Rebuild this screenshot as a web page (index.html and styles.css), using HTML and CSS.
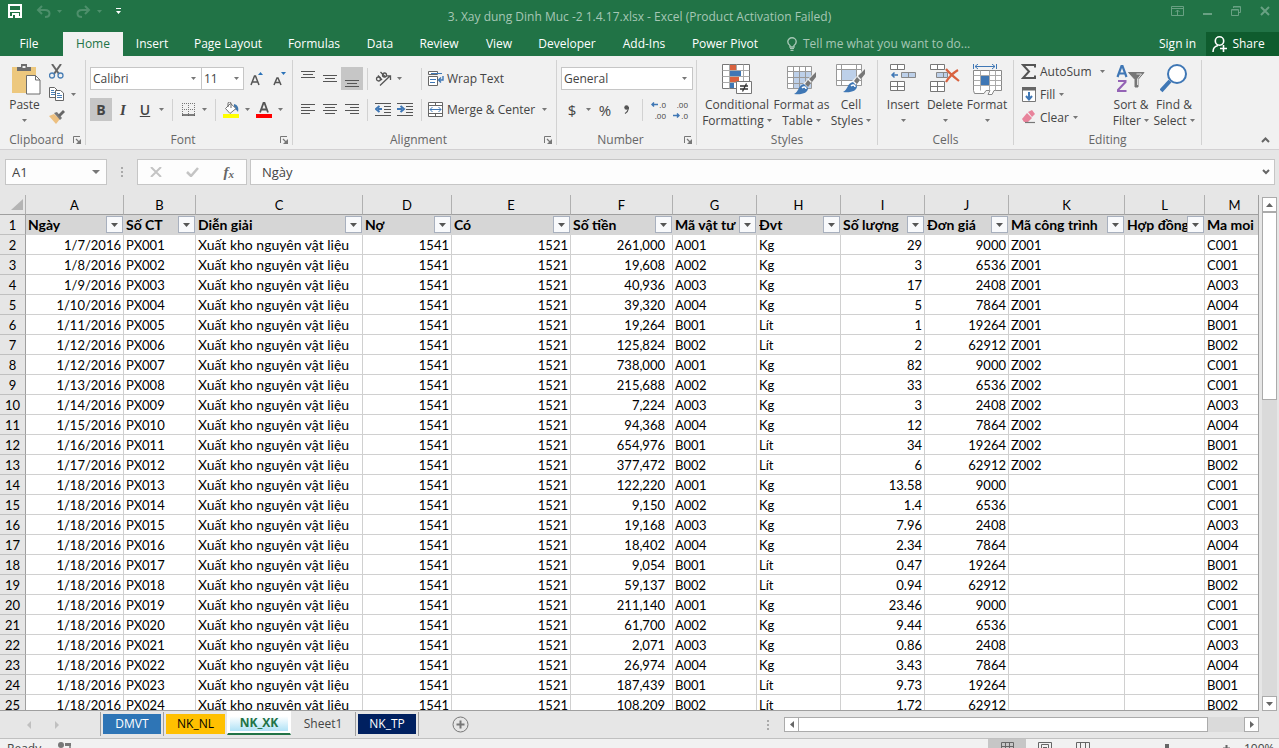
FILE: index.html
```html
<!DOCTYPE html>
<html lang="vi">
<head>
<meta charset="utf-8">
<title>3. Xay dung Dinh Muc -2 1.4.17.xlsx - Excel</title>
<link rel="stylesheet" href="styles.css">
</head>
<body>
<svg class="defs" width="0" height="0" aria-hidden="true">
  <symbol id="caret" viewBox="0 0 5 3"><path d="M0 0h5L2.5 3z" fill="currentColor"/></symbol>
  <symbol id="launcher" viewBox="0 0 8 8"><path d="M.5 7V.5H7" fill="none" stroke="#777"/><path d="M3 3l3 3M7.5 3.500v4h-4" fill="none" stroke="#777" stroke-width="1.200"/><path d="M7 4v3H4z" fill="#777"/></symbol>
</svg>
<div class="app">
  <header class="titlebar">
    <div class="quick">
      <button class="qbtn" aria-label="Save"><svg width="14" height="14" viewBox="0 0 14 14"><path d="M1 1h12v12H1z" fill="none" stroke="#fff" stroke-width="2"/><path d="M1 7h12" stroke="#fff" stroke-width="2"/><path d="M4 9h7v5H4z" fill="#fff"/><path d="M5 11h2v3H5z" fill="#217346"/></svg></button>
      <button class="qbtn dim" aria-label="Undo"><svg width="15" height="13" viewBox="0 0 15 13"><path d="M6 1L2 5l4 4M2 5h7c6 0 6 7 0 7" fill="none" stroke="currentColor" stroke-width="2"/></svg><svg class="caret" width="5" height="3"><use href="#caret"/></svg></button>
      <button class="qbtn dim" aria-label="Redo"><svg width="15" height="13" viewBox="0 0 15 13"><path d="M9 1l4 4-4 4M13 5H6c-6 0-6 7 0 7" fill="none" stroke="currentColor" stroke-width="2"/></svg><svg class="caret" width="5" height="3"><use href="#caret"/></svg></button>
      <button class="qbtn" aria-label="Customize"><svg width="5" height="6" viewBox="0 0 5 6"><path d="M0 0h5v1H0zM0 3h5L2.500 6z" fill="#fff"/></svg></button>
    </div>
    <h1 class="title">3. Xay dung Dinh Muc -2 1.4.17.xlsx - Excel (Product Activation Failed)</h1>
    <div class="winbtns">
      <button aria-label="Ribbon display"><svg width="13" height="10" viewBox="0 0 13 10"><path d="M.5.500h12v9H.500zM1 2.500h11M6.500 9V4M4.500 6l2-2 2 2" fill="none" stroke="currentColor"/></svg></button>
      <button aria-label="Minimize"><svg width="9" height="10" viewBox="0 0 9 10"><path d="M0 7h9v2H0z" fill="currentColor"/></svg></button>
      <button aria-label="Restore"><svg width="10" height="10" viewBox="0 0 10 10"><path d="M2.500 2V.500h7v6H8M.500 3.500h7v6h-7zM2 1h7M1 4h6" fill="none" stroke="currentColor"/></svg></button>
      <button aria-label="Close"><svg width="10" height="10" viewBox="0 0 10 10"><path d="M1 1l8 8M9 1L1 9" stroke="currentColor" stroke-width="2"/></svg></button>
    </div>
  </header>
  <nav class="tabs">
    <button class="file">File</button>
    <button class="active">Home</button><button>Insert</button><button>Page Layout</button><button>Formulas</button><button>Data</button><button>Review</button><button>View</button><button>Developer</button><button>Add-Ins</button><button>Power Pivot</button>
    <button class="tell"><svg width="10" height="14" viewBox="0 0 10 14"><path d="M3 10V8.500C1.500 7.500.800 6.500.800 4.800.800 2.500 2.700.800 5 .800s4.200 1.700 4.200 4c0 1.700-.700 2.700-2.200 3.700V10z" fill="none" stroke="currentColor" stroke-width="1.400"/><path d="M3 11.500h4M3.500 13.300h3" stroke="currentColor" stroke-width="1.200"/></svg>Tell me what you want to do...</button>
    <span class="grow"></span>
    <button class="signin">Sign in</button>
    <button class="share"><svg width="16" height="16" viewBox="0 0 16 16"><circle cx="7.500" cy="5" r="4.200" fill="none" stroke="#fff" stroke-width="1.600"/><path d="M1 16c0-4 2.500-6 5-6.500M11.500 9v7M8 12.500h7" fill="none" stroke="#fff" stroke-width="1.600"/></svg>Share</button>
  </nav>

  <section class="ribbon">
    <div class="group clipboard">
      <div class="body">
        <button class="big paste"><svg width="29" height="31" viewBox="0 0 29 31"><path d="M0 3h24v26H0z" fill="#edc87e"/><path d="M5 7V3h4V0h6v3h4v4z" fill="#6d6d6d"/><path d="M10.500 2h3v2h-3z" fill="#f1f1f1"/><path d="M14.500 11.500h9l4.500 4.500v14H14.500z" fill="#fff" stroke="#6d6d6d"/><path d="M23.500 11.500V16H28" fill="none" stroke="#6d6d6d"/></svg><span>Paste</span><svg class="caret" width="5" height="3"><use href="#caret"/></svg></button>
        <div class="stack">
          <button aria-label="Cut"><svg width="15" height="15" viewBox="0 0 15 15"><path d="M3 0l7 10M12 0L5 10" stroke="#666" stroke-width="2"/><circle cx="3" cy="11.500" r="2.500" fill="none" stroke="#4a7fb5" stroke-width="1.300"/><circle cx="11.500" cy="11.500" r="2.500" fill="none" stroke="#4a7fb5" stroke-width="1.300"/></svg></button>
          <button aria-label="Copy"><svg width="15" height="14" viewBox="0 0 15 14"><path d="M.500.500h5L8 3v7.500H.500z" fill="#fff" stroke="#666"/><path d="M2 3.500h3M2 5.500h4M2 7.500h4" stroke="#4a7fb5"/><path d="M6.500 3.500h5L14.500 6v7.500h-8z" fill="#fff" stroke="#666"/><path d="M8 6.500h3M8 8.500h5M8 10.500h5" stroke="#4a7fb5"/></svg><svg class="caret" width="5" height="3"><use href="#caret"/></svg></button>
          <button aria-label="Format Painter"><svg width="16" height="14" viewBox="0 0 16 14"><path d="M0 6l5-2 6 5-4 5z" fill="#edc080"/><path d="M5 3l3-1 5 6-2 2z" fill="#777"/><path d="M9 5l5-5 2 2-5 5z" fill="#666"/></svg></button>
        </div>
      </div>
      <div class="label">Clipboard<button class="launch" aria-label="Clipboard options"><svg width="8" height="8"><use href="#launcher"/></svg></button></div>
    </div>

    <div class="group font">
      <div class="rows">
        <div class="row">
          <div class="combo family"><select aria-label="Font"><option>Calibri</option></select><svg class="caret" width="5" height="3"><use href="#caret"/></svg></div>
          <div class="combo size"><select aria-label="Font size"><option>11</option></select><svg class="caret" width="5" height="3"><use href="#caret"/></svg></div>
          <button class="tool grow-font" aria-label="Increase font size"><svg width="14" height="14" viewBox="0 0 14 14"><path d="M1 13L4.500 4h1L9 13M2.500 10h5" fill="none" stroke="#555" stroke-width="1.500"/><path d="M8 3h5l-2.500-3z" fill="#2b72b8"/></svg></button>
          <button class="tool" aria-label="Decrease font size"><svg width="14" height="14" viewBox="0 0 14 14"><path d="M1 13l3-7h1l3 7M2 10.500h5" fill="none" stroke="#555" stroke-width="1.500"/><path d="M8 0h5l-2.500 3z" fill="#2b72b8"/></svg></button>
        </div>
        <div class="row">
          <button class="tool on"><b>B</b></button>
          <button class="tool"><i class="serif">I</i></button>
          <button class="tool"><u>U</u></button>
          <button class="drop" aria-label="Underline options"><svg class="caret" width="5" height="3"><use href="#caret"/></svg></button>
          <span class="vsep"></span>
          <button class="tool" aria-label="Borders"><svg width="13" height="13" viewBox="0 0 13 13"><path d="M0 .500h13M0 6.500h13M.500 0v13M6.500 0v13M12.500 0v13" stroke="#777" stroke-dasharray="1 1"/><path d="M0 12h13" stroke="#555" stroke-width="1.500"/></svg></button>
          <button class="drop" aria-label="Border options"><svg class="caret" width="5" height="3"><use href="#caret"/></svg></button>
          <span class="vsep"></span>
          <button class="tool" aria-label="Fill color"><svg width="16" height="16" viewBox="0 0 16 16"><path d="M11 2c4 1 5 4 4 8-1-2-3-3-4-3z" fill="#3f77ae"/><path d="M2.500 6.500l5-5 5.500 5-6 5z" fill="#fff" stroke="#777"/><path d="M5 5V1.500a1 1 0 0 1 3 0V6" fill="none" stroke="#666"/><path d="M0 12h16v4H0z" fill="#ff0"/></svg></button>
          <button class="drop" aria-label="Fill options"><svg class="caret" width="5" height="3"><use href="#caret"/></svg></button>
          <button class="tool" aria-label="Font color"><svg width="16" height="16" viewBox="0 0 16 16"><path d="M4 10.500L7.500 1h1L12 10.500M5.500 7.500h5" fill="none" stroke="#555" stroke-width="1.800"/><path d="M0 12h16v4H0z" fill="#f00"/></svg></button>
          <button class="drop" aria-label="Font color options"><svg class="caret" width="5" height="3"><use href="#caret"/></svg></button>
        </div>
      </div>
      <div class="label">Font<button class="launch" aria-label="Font options"><svg width="8" height="8"><use href="#launcher"/></svg></button></div>
    </div>

    <div class="group align">
      <div class="rows">
        <div class="row">
          <button class="tool" aria-label="Top align"><svg width="14" height="16" viewBox="0 0 14 16"><path d="M0 .500h14M2 3.500h10M0 6.500h14" stroke="#555"/></svg></button>
          <button class="tool" aria-label="Middle align"><svg width="14" height="16" viewBox="0 0 14 16"><path d="M0 4.500h14M2 7.500h10M0 10.500h14" stroke="#555"/></svg></button>
          <button class="tool on" aria-label="Bottom align"><svg width="14" height="16" viewBox="0 0 14 16"><path d="M0 9.500h14M2 12.500h10M0 15.500h14" stroke="#555"/></svg></button>
          <span class="vsep"></span>
          <button class="tool" aria-label="Orientation"><svg width="17" height="15" viewBox="0 0 17 15"><g fill="none" stroke="#555" stroke-width="1.300"><circle cx="3.500" cy="8" r="2"/><path d="M3 4.500l4 4.500M5.500 1l5 5"/><circle cx="9.500" cy="4" r="2"/><path d="M5 14.500L15 5M11.500 4.800H15.500V9"/></g></svg></button>
          <button class="drop" aria-label="Orientation options"><svg class="caret" width="5" height="3"><use href="#caret"/></svg></button>
          <span class="vsep wide"></span>
          <button class="wide-btn"><svg width="16" height="15" viewBox="0 0 16 15"><path d="M.500.500h9v3h-9zM.500 7V5.500h9v9h-9z" fill="#fff" stroke="#666"/><path d="M3 2.500h11M2 8.500h6M2 11.500h5" stroke="#3f77b5"/><path d="M15 5v4h-4M13 6.500L10.500 9l2.500 2.500" fill="none" stroke="#3f77b5" stroke-width="1.400"/></svg>Wrap Text</button>
        </div>
        <div class="row">
          <button class="tool" aria-label="Align left"><svg width="14" height="11" viewBox="0 0 14 11"><path d="M0 .500h14M0 3.500h9M0 6.500h14M0 9.500h9" stroke="#555"/></svg></button>
          <button class="tool" aria-label="Center"><svg width="14" height="11" viewBox="0 0 14 11"><path d="M0 .500h14M2 3.500h10M0 6.500h14M2 9.500h10" stroke="#555"/></svg></button>
          <button class="tool" aria-label="Align right"><svg width="14" height="11" viewBox="0 0 14 11"><path d="M0 .500h14M5 3.500h9M0 6.500h14M5 9.500h9" stroke="#555"/></svg></button>
          <span class="vsep"></span>
          <button class="tool" aria-label="Decrease indent"><svg width="16" height="13" viewBox="0 0 16 13"><path d="M0 .500h16M9 3.500h7M9 6.500h7M9 9.500h7M0 12.500h16" stroke="#555"/><path d="M7 6H3M4.500 3L1 6l3.500 3" fill="none" stroke="#3f77b5" stroke-width="2"/></svg></button>
          <button class="tool" aria-label="Increase indent"><svg width="16" height="13" viewBox="0 0 16 13"><path d="M0 .500h16M9 3.500h7M9 6.500h7M9 9.500h7M0 12.500h16" stroke="#555"/><path d="M0 6h5M3.500 3L7 6 3.500 9" fill="none" stroke="#3f77b5" stroke-width="2"/></svg></button>
          <span class="vsep indent"></span>
          <button class="wide-btn"><svg width="16" height="15" viewBox="0 0 16 15"><path d="M.500.500h14v14H.500zM0 3.500h15M0 11.500h15M7.500 0v3.500M7.500 11.500V15" fill="#fff" stroke="#666"/><path d="M2 7.500h11M4.500 5L2 7.500 4.500 10M10.500 5L13 7.500 10.500 10" fill="none" stroke="#3f77b5"/></svg>Merge &amp; Center</button>
          <button class="drop end" aria-label="Merge options"><svg class="caret" width="5" height="3"><use href="#caret"/></svg></button>
        </div>
      </div>
      <div class="label">Alignment<button class="launch" aria-label="Alignment options"><svg width="8" height="8"><use href="#launcher"/></svg></button></div>
    </div>

    <div class="group number">
      <div class="rows">
        <div class="row"><div class="combo format"><select aria-label="Number format"><option>General</option></select><svg class="caret" width="5" height="3"><use href="#caret"/></svg></div></div>
        <div class="row">
          <button class="tool sym">$</button>
          <button class="drop" aria-label="Currency options"><svg class="caret" width="5" height="3"><use href="#caret"/></svg></button>
          <button class="tool sym">%</button>
          <button class="tool comma" aria-label="Comma style"><svg width="5" height="9" viewBox="0 0 5 9"><circle cx="2.500" cy="2.500" r="2.200" fill="#555"/><path d="M4.500 2c0 3-1 5-3.500 6.500" fill="none" stroke="#555" stroke-width="1.200"/></svg></button>
          <span class="vsep"></span>
          <button class="tool dec" aria-label="Increase decimal"><span><svg width="7" height="5" viewBox="0 0 7 5"><path d="M7 2.500H1M3 .500l-2 2 2 2" fill="none" stroke="#3f77b5" stroke-width="1.500"/></svg>.0</span><span>.00</span></button>
          <button class="tool dec" aria-label="Decrease decimal"><span>.00</span><span><svg width="7" height="5" viewBox="0 0 7 5"><path d="M0 2.500h6M4 .500l2 2-2 2" fill="none" stroke="#3f77b5" stroke-width="1.500"/></svg>.0</span></button>
        </div>
      </div>
      <div class="label">Number<button class="launch" aria-label="Number options"><svg width="8" height="8"><use href="#launcher"/></svg></button></div>
    </div>

    <div class="group styles">
      <div class="body">
        <button class="big"><svg width="30" height="31" viewBox="0 0 30 31"><path d="M.500.500h27v24H.500z" fill="#fff" stroke="#777"/><path d="M8 1h6v5H8zM8 13h9v5H8z" fill="#d9623f"/><path d="M8 7h11v5H8zM8 19h4v5H8z" fill="#3f77b5"/><path d="M.500 6.500h27M.500 12.500h27M.500 18.500h27M7.500.500v24M14.500.500v24M21.500.500v24" fill="none" stroke="#aaa"/><path d="M8 1h6v5H8zM8 13h9v5H8z" fill="#d9623f"/><path d="M8 7h11v5H8z" fill="#3f77b5"/><path d="M14.500 17.500h15v12h-15z" fill="#fff" stroke="#777"/><path d="M18 22h8M18 25h8M24.500 19.500l-4 8" stroke="#333" stroke-width="1.300"/></svg><span>Conditional<br>Formatting <svg class="caret" width="5" height="3"><use href="#caret"/></svg></span></button>
        <button class="big"><svg width="30" height="31" viewBox="0 0 30 31"><path d="M.500 2.500h24v22H.500z" fill="#fff"/><path d="M7 8h17v16H7z" fill="#bdd0e9"/><path d="M.500 2.500h24v22H.500zM.500 7.500h24M.500 13.500h24M.500 19.500h24M6.500 2.500v22M12.500 2.500v22M18.500 2.500v22" fill="none" stroke="#999"/><path d="M29 7v6l-9 10-4-3z" fill="#f1f1f1"/><path d="M29 8v5l-4 5-3-3zM21 16l3 3-3 4-3-3z" fill="#777"/><path d="M17 20l4 4c0 5-6 7-14 6 5-2 4-9 10-10z" fill="#3f77b5"/><path d="M15 24c2-2 4-1 4 1" fill="none" stroke="#fff" stroke-width="1.500"/></svg><span>Format as<br>Table <svg class="caret" width="5" height="3"><use href="#caret"/></svg></span></button>
        <button class="big"><svg width="30" height="31" viewBox="0 0 30 31"><path d="M.500.500h25v21H.500z" fill="#fff"/><path d="M6 6h14v10H6z" fill="#bdd0e9"/><path d="M.500.500h25v21H.500zM.500 5.500h25M.500 16.500h25M5.500.500v21M20.500.500v21" fill="none" stroke="#999"/><path d="M29 4v6l-8 10-5-3z" fill="#f1f1f1"/><path d="M29 5v5l-4 5-3-3zM21 13l3 3-3 4-3-3z" fill="#777"/><path d="M17 18l4 4c0 5-6 7-14 6 5-2 4-9 10-10z" fill="#3f77b5"/><path d="M15 22c2-2 4-1 4 1" fill="none" stroke="#fff" stroke-width="1.500"/></svg><span>Cell<br>Styles <svg class="caret" width="5" height="3"><use href="#caret"/></svg></span></button>
      </div>
      <div class="label">Styles</div>
    </div>

    <div class="group cells">
      <div class="body">
        <button class="big"><svg width="26" height="31" viewBox="0 0 26 31"><path d="M.500.500h14v5H.500zM7.500.500v5M.500 17.500h14v9H.500zM.500 22.500h14M7.500 17.500v9" fill="#fff" stroke="#777"/><path d="M11.500 8.500h14v5h-14zM18.500 8.500v5" fill="#bdd0e9" stroke="#888"/><path d="M8 11H2M4.500 8.500L2 11l2.500 2.500" fill="none" stroke="#3f77b5" stroke-width="1.500"/></svg><span>Insert</span><svg class="caret" width="5" height="3"><use href="#caret"/></svg></button>
        <button class="big"><svg width="30" height="31" viewBox="0 0 30 31"><path d="M.500.500h14v5H.500zM7.500.500v5M.500 17.500h14v10H.500zM.500 22.500h14M7.500 17.500v10" fill="#fff" stroke="#777"/><path d="M6.500 8.500h11v5h-11zM13.500 8.500v5" fill="#bdd0e9" stroke="#888"/><path d="M16 5c3 4 8 8 13 12M28 6c-5 3-9 7-12 12" fill="none" stroke="#d9623f" stroke-width="2.200"/></svg><span>Delete</span><svg class="caret" width="5" height="3"><use href="#caret"/></svg></button>
        <button class="big"><svg width="29" height="31" viewBox="0 0 29 31"><path d="M.500 0v5M23.500 0v5M2 2.500h20M5 0L2 2.500 5 5M19 0l3 2.500L19 5" fill="none" stroke="#3f77b5"/><path d="M.500 6.500h28v20H21l-2 4h-4l2-4h-4l-2 3H1.500l-1-3z" fill="#fff" stroke="#888"/><path d="M.500 11.500h28M.500 21.500h28M7.500 6.500v20M16.500 6.500v20M22.500 6.500v20M.500 16.500h28" fill="none" stroke="#aaa"/><path d="M8 12h8v9H8z" fill="#3f77b5"/></svg><span>Format</span><svg class="caret" width="5" height="3"><use href="#caret"/></svg></button>
      </div>
      <div class="label">Cells</div>
    </div>

    <div class="group editing">
      <div class="body">
        <div class="edits">
          <button><svg width="15" height="15" viewBox="0 0 15 15"><path d="M14 3.500V1H2l6 6.500L2 14h12v-2.500" fill="none" stroke="#555" stroke-width="2"/></svg>AutoSum<svg class="caret far" width="5" height="3"><use href="#caret"/></svg></button>
          <button><svg width="15" height="15" viewBox="0 0 15 15"><path d="M1.500.500h13v14h-13z" fill="#fff" stroke="#777"/><path d="M1 0h14v3.500H1z" fill="#666"/><path d="M8 5v7M5 9l3 3.500L11 9" fill="none" stroke="#3f77b5" stroke-width="2"/></svg>Fill<svg class="caret" width="5" height="3"><use href="#caret"/></svg></button>
          <button><svg width="15" height="15" viewBox="0 0 15 15"><path d="M7 2l4-2 3 4-3 3z" fill="#e8839b"/><path d="M6 3l5 5-4 4H3L1 9z" fill="#e8839b"/><path d="M4 12.500h10" stroke="#777" stroke-width="1.200"/></svg>Clear<svg class="caret" width="5" height="3"><use href="#caret"/></svg></button>
        </div>
        <button class="big sort"><svg width="30" height="31" viewBox="0 0 30 31"><path d="M1.500 13L5.500 2h1l4 11M3 9.500h6" fill="none" stroke="#3f77b5" stroke-width="2.200"/><path d="M2 17h7.500v1L2 26v1h8.500" fill="none" stroke="#9463b5" stroke-width="2"/><path d="M12.500 8.500H28l-6 7V23h-3v-7.500z" fill="#777" stroke="#777"/><path d="M20.500 10h5l-4 5v6" fill="none" stroke="#ddd"/></svg><span>Sort &amp;<br>Filter <svg class="caret" width="5" height="3"><use href="#caret"/></svg></span></button>
        <button class="big find"><svg width="28" height="31" viewBox="0 0 28 31"><path d="M10 17L1 27" stroke="#3f77b5" stroke-width="4"/><circle cx="17" cy="10" r="9" fill="#fff" stroke="#3f77b5" stroke-width="2"/></svg><span>Find &amp;<br>Select <svg class="caret" width="5" height="3"><use href="#caret"/></svg></span></button>
      </div>
      <div class="label">Editing</div>
    </div>
    <button class="collapse" aria-label="Collapse ribbon"><svg width="9" height="6" viewBox="0 0 9 6"><path d="M1 5l3.500-3.500L8 5" fill="none" stroke="#666" stroke-width="2"/></svg></button>
  </section>

  <section class="formula">
    <div class="namebox"><input aria-label="Name box" value="A1"><svg width="8" height="4" viewBox="0 0 8 4"><path d="M0 0h8L4 4z" fill="#777"/></svg></div>
    <span class="dots"><i></i><i></i><i></i></span>
    <div class="fx">
      <button aria-label="Cancel"><svg width="12" height="10" viewBox="0 0 12 10"><path d="M1 0l10 10M11 0L1 10" stroke="#c4c4c4" stroke-width="2"/></svg></button>
      <button aria-label="Enter"><svg width="13" height="10" viewBox="0 0 13 10"><path d="M1 5l4 4 7-8" fill="none" stroke="#c4c4c4" stroke-width="2.500"/></svg></button>
      <button class="fn"><i>f</i><i class="sub">x</i></button>
    </div>
    <div class="entry"><input aria-label="Formula" value="Ngày"><svg width="8" height="6" viewBox="0 0 8 6"><path d="M1 1l3 3 3-3" fill="none" stroke="#666" stroke-width="2"/></svg></div>
  </section>

  <main class="sheet">
    <div class="gridwrap">
      <table class="grid">
        <colgroup><col class="w26"><col class="w98"><col class="w72"><col class="w167"><col class="w89"><col class="w119"><col class="w102"><col class="w84"><col class="w84"><col class="w84"><col class="w84"><col class="w116"><col class="w80"><col></colgroup>
        <thead></thead>
        <tbody></tbody>
      </table>
    </div>
    <div class="vscroll">
      <button aria-label="Scroll up"><svg width="7" height="4" viewBox="0 0 7 4"><path d="M0 4h7L3.500 0z" fill="#666"/></svg></button>
      <span class="vthumb"></span>
      <span class="grow"></span>
      <button aria-label="Scroll down"><svg width="7" height="4" viewBox="0 0 7 4"><path d="M0 0h7L3.500 4z" fill="#666"/></svg></button>
    </div>
  </main>

  <footer class="sheetbar">
    <div class="sheetnav">
      <button aria-label="Previous sheet"><svg width="4" height="8" viewBox="0 0 4 8"><path d="M4 0v8L0 4z" fill="#c0c0c0"/></svg></button>
      <button aria-label="Next sheet"><svg width="4" height="8" viewBox="0 0 4 8"><path d="M0 0v8l4-4z" fill="#c0c0c0"/></svg></button>
    </div>
    <div class="sheettabs">
      <button class="blue">DMVT</button>
      <button class="gold">NK_NL</button>
      <button class="current">NK_XK</button>
      <button class="plain">Sheet1</button>
      <button class="navy">NK_TP</button>
    </div>
    <button class="add" aria-label="New sheet"><svg width="17" height="17" viewBox="0 0 17 17"><circle cx="8.500" cy="8.500" r="7.500" fill="none" stroke="#777"/><path d="M8.500 4.500v8M4.500 8.500h8" stroke="#777" stroke-width="2"/></svg></button>
    <span class="grow"></span>
    <span class="dots"><i></i><i></i><i></i></span>
    <div class="hscroll">
      <button aria-label="Scroll left"><svg width="4" height="7" viewBox="0 0 4 7"><path d="M4 0v7L0 3.500z" fill="#666"/></svg></button>
      <span class="hthumb"></span>
      <span class="grow"></span>
      <button aria-label="Scroll right"><svg width="4" height="7" viewBox="0 0 4 7"><path d="M0 0v7l4-3.500z" fill="#666"/></svg></button>
    </div>
  </footer>
  <div class="status">
    <span class="ready">Ready</span>
    <svg width="13" height="14" viewBox="0 0 13 14"><circle cx="3" cy="3" r="3" fill="#777"/><path d="M12 3v6H9" fill="none" stroke="#777" stroke-width="1.500"/><path d="M7 1h6v3H7z" fill="#777"/></svg>
    <span class="grow"></span>
    <button class="view sel" aria-label="Normal"><svg width="13" height="12" viewBox="0 0 13 12"><path d="M.500.500h12v11H.500zM.500 4.500h12M.500 8.500h12M4.500.500v11M8.500.500v11" fill="none" stroke="#666"/></svg></button>
    <button class="view" aria-label="Page layout"><svg width="14" height="12" viewBox="0 0 14 12"><path d="M.500.500h13v11H.500zM3.500 2.500h7v9h-7zM5 5.500h4" fill="none" stroke="#666"/></svg></button>
    <button class="view" aria-label="Page break"><svg width="14" height="12" viewBox="0 0 14 12"><path d="M.500.500h13v11H.500zM4.500.500v7M9.500.500v7" fill="none" stroke="#666"/></svg></button>
    <span class="zoomthumb"></span>
    <svg class="zoomplus" width="7" height="7" viewBox="0 0 7 7"><path d="M3.500 0v7M0 3.500h7" stroke="#666" stroke-width="2"/></svg>
    <span class="zoom">100%</span>
  </div>
</div>
<script src="app.js"></script>
</body>
</html>
```

FILE: styles.css
```css
* { box-sizing: border-box; }
body { margin: 0; font: 12px/16px "Open Sans", "Noto Sans", sans-serif; color: #444; overflow: hidden; }
button, input, select { font: inherit; color: inherit; border: 0; background: none; padding: 0; margin: 0; border-radius: 0; outline: 0; }
button { display: flex; align-items: center; justify-content: center; white-space: nowrap; }
svg { display: block; flex: none; }
.defs { position: absolute; }
.grow { flex: 1; }
.caret { color: #777; }
.app { display: flex; flex-direction: column; height: 100vh; background: #e6e6e6; }

.titlebar { display: grid; grid-template-columns: 1fr auto 1fr; height: 32px; background: #217346; color: #a6c7b5; }
.quick { display: flex; align-items: flex-start; gap: 14px; padding: 4px 8px; }
.qbtn { height: 14px; gap: 6px; }
.qbtn .caret { color: inherit; }
.qbtn.dim { color: #4d8f6b; }
.title { margin: 0; padding-top: 9px; font-size: 12px; line-height: 16px; font-weight: 400; white-space: nowrap; }
.winbtns { display: flex; justify-content: flex-end; align-items: flex-start; gap: 19px; padding: 6px 9px 0 0; color: #69a183; }

.tabs { display: flex; height: 24px; background: #217346; color: #fff; }
.tabs button { flex: none; }
.tabs button:nth-child(1) { width: 58px; margin-right: 5px; }
.tabs button:nth-child(2) { width: 60px; }
.tabs button:nth-child(3) { width: 58px; }
.tabs button:nth-child(4) { width: 94px; }
.tabs button:nth-child(5) { width: 78px; }
.tabs button:nth-child(6) { width: 54px; }
.tabs button:nth-child(7) { width: 64px; }
.tabs button:nth-child(8) { width: 56px; }
.tabs button:nth-child(9) { width: 80px; }
.tabs button:nth-child(10) { width: 74px; }
.tabs button:nth-child(11) { width: 88px; }
.tabs .active { background: #f1f1f1; color: #217346; }
.tabs .tell { gap: 6px; margin-left: 18px; color: #a6c7b5; }
.tabs .signin { margin-right: 10px; }
.tabs .share { width: 73px; gap: 4px; padding-right: 8px; background: #0f5c2e; }

.ribbon { display: flex; flex: none; padding: 4px 0; height: 94px; background: #f1f1f1; border-bottom: 1px solid #d2d0d2; }
.group { display: flex; flex: none; flex-direction: column; height: 85px; border-right: 1px solid #d2d2d2; }
.body { display: flex; flex: none; height: 73px; }
.rows { display: flex; flex: none; flex-direction: column; height: 73px; gap: 8px; padding: 7px 0 0 4px; }
.row { display: flex; align-items: center; height: 23px; }
.label { display: flex; align-items: center; justify-content: center; height: 13px; color: #666; }
.launch { flex: 1; justify-content: flex-end; margin-right: 4px; }
.label:has(.launch)::before { content: ""; flex: 1; margin-right: -8px; }
.clipboard { width: 86px; }
.font { width: 207px; }
.align { width: 264px; }
.number { width: 140px; }
.styles { width: 181px; }
.cells { width: 136px; }
.editing { width: 188px; }

.big { flex-direction: column; justify-content: flex-start; padding-top: 4px; width: 50px; }
.big > svg:first-child { height: 31px; }
.big > span { margin-top: 2px; text-align: center; line-height: 16px; }
.big > span .caret { display: inline-block; vertical-align: 3px; }
.big > .caret { margin-top: 6px; }
.paste { width: 49px; padding-left: 4px; }
.paste > span, .paste > .caret { margin-left: -4px; }
.stack { display: flex; flex-direction: column; gap: 1px; }
.stack button { justify-content: flex-start; gap: 7px; height: 22px; }

.combo { display: flex; align-items: center; height: 23px; padding-right: 5px; border: 1px solid #c6c6c6; background: #fff; }
.combo select { flex: 1; min-width: 0; height: 21px; padding-left: 2px; appearance: none; }
.family { width: 112px; }
.size { width: 43px; margin-left: -1px; padding-right: 4px; }
.format { width: 132px; }
.tool { width: 22px; height: 23px; flex: none; font-size: 14px; }
.grow-font { margin: 0 1px 0 2px; }
.on { background: #c6c6c6; }
.serif { font-family: "Liberation Serif", serif; font-weight: 700; font-size: 15px; }
.tool u { font-weight: 600; }
.drop { width: 11px; height: 23px; flex: none; }
.vsep { width: 1px; height: 22px; margin: 0 4px 0 5px; background: #d2d2d2; }
.align .vsep { margin: 0 4px; }
.align .vsep.wide { margin: 0 6px 0 16px; }
.align .vsep.indent { margin: 0 6px 0 5px; }
.wide-btn { gap: 3px; }
.end { margin-left: auto; margin-right: 6px; }
.sym { font-size: 15px; }
.number .vsep { margin: 0 4px; }
.number .comma { padding-right: 2px; }
.dec { flex-direction: column; align-items: flex-end; font-size: 8px; line-height: 11px; padding-right: 3px; }
.dec span { display: flex; align-items: center; gap: 1px; height: 11px; }

.styles .big:nth-child(1) { width: 80px; }
.styles .big:nth-child(2) { width: 49px; }
.styles .big:nth-child(3) { width: 50px; }
.cells .big { width: 42px; }
.cells .body { padding-left: 4px; }
.edits { display: flex; flex-direction: column; width: 94px; padding-left: 7px; }
.edits button { gap: 4px; height: 23px; justify-content: flex-start; }
.edits .far { margin-left: auto; margin-right: 3px; }
.sort { width: 46px; }
.find { width: 40px; }
.collapse { margin-left: auto; margin-right: 9px; align-self: flex-end; height: 10px; }

.formula { display: flex; flex: none; height: 45px; padding: 9px 4px 10px 5px; font-size: 13px; }
.namebox, .fx, .entry { display: flex; align-items: center; height: 26px; background: #fdfdfd; border: 1px solid #c6c6c6; }
.namebox { width: 102px; padding: 0 6px; }
.namebox input, .entry input { flex: 1; min-width: 0; }
.dots { display: flex; flex-direction: column; justify-content: center; gap: 2px; }
.dots i { width: 2px; height: 2px; background: #aaa; }
.formula .dots { width: 30px; align-items: center; }
.fx { width: 110px; justify-content: space-around; }
.fn { font-family: "Liberation Serif", serif; font-size: 15px; color: #666; font-weight: 700; }
.fn .sub { font-size: 11px; padding-top: 4px; }
.entry { flex: 1; margin-left: 3px; padding: 0 4px 0 11px; }

.sheet { display: flex; flex: 1; min-height: 0; }
.gridwrap { flex: 1; min-width: 0; overflow: hidden; border-right: 1px solid #9f9f9f; border-bottom: 1px solid #9f9f9f; }
.grid { width: 100%; table-layout: fixed; border-collapse: separate; border-spacing: 0; font: 13px/18px Lato, "Noto Sans", sans-serif; color: #000; background: #fff; }
.w26 { width: 26px; } .w98 { width: 98px; } .w72 { width: 72px; } .w167 { width: 167px; } .w89 { width: 89px; }
.w119 { width: 119px; } .w102 { width: 102px; } .w84 { width: 84px; } .w116 { width: 116px; } .w80 { width: 80px; }
.grid td, .grid th { height: 20px; padding: 0 2px; overflow: hidden; white-space: nowrap; text-align: left; border: 0 solid #d0d0d0; border-width: 0 1px 1px 0; }
.grid td.num { text-align: right; }
.grid td.money { text-align: right; padding-right: 7px; }
.grid td.desc { font-size: 14px; }
.grid thead th { font-weight: 400; text-align: center; background: #e6e6e6; border-right-color: #b0b0b0; border-bottom-color: #9f9f9f; }
.grid tbody th { font-weight: 400; text-align: center; background: #e6e6e6; border-right-color: #9f9f9f; border-bottom-color: #c0c0c0; }
.grid td:last-child, .grid thead th:last-child { border-right: 0; }
.grid thead th:last-child { padding-left: 8px; }
.grid .heads td { padding-right: 0; font-size: 14px; font-weight: 700; background: #d6d6d6; border-color: #d6d6d6; }
.cell { display: flex; align-items: center; }
.cell span { flex: 1; min-width: 0; overflow: hidden; }
.cell button { flex: none; width: 17px; height: 17px; background: #f8f9fb; border: 1px solid #a8b0be; }
.corner svg { margin-left: auto; }

.vscroll { display: flex; flex-direction: column; flex: none; width: 15px; margin: 2px 2px 0 3px; background: #dadada; }
.vscroll button { height: 15px; background: #fff; border: 1px solid #ababab; }
.vthumb { height: 188px; background: #fff; border: 1px solid #ababab; }

.sheetbar { display: flex; flex: none; height: 27px; font-size: 12px; }
.sheetnav { display: flex; align-items: center; gap: 24px; width: 100px; padding-left: 27px; }
.sheettabs { display: flex; align-items: flex-start; }
.sheettabs button { width: 64px; height: 24px; margin-top: 1px; border: 1px solid #9f9f9f; border-width: 0 1px; box-shadow: inset 0 0 0 2px #e6e6e6; }
.sheettabs .blue { background: #2e75b6; color: #fff; }
.sheettabs .gold { width: 63px; background: #ffc000; color: #000; border: 0; }
.sheettabs .current { margin-top: 0; font-weight: 700; color: #217346; background: linear-gradient(#fff 20%, #a5def5); border: 1px solid #fff; border-bottom: 2px solid #217346; box-shadow: inset 0 0 0 2px #fff; }
.sheettabs .plain { border: 0; box-shadow: none; }
.sheettabs .navy { background: #002060; color: #fff; }
.add { width: 17px; margin-left: 33px; }
.sheetbar .dots { margin-right: 15px; }
.hscroll { display: flex; flex: none; width: 475px; height: 15px; margin: 6px 20px 0 0; background: #dadada; }
.hscroll button { width: 15px; background: #fff; border: 1px solid #ababab; }
.hthumb { width: 410px; margin-left: -1px; background: #fff; border: 1px solid #ababab; }

.status { display: flex; flex: none; align-items: flex-start; height: 10px; overflow: hidden; background: #f1f1f1; border-top: 1px solid #c0c0c0; }
.status svg { margin-top: 3px; }
.ready { width: 58px; padding: 2px 0 0 7px; }
.view { width: 38px; height: 22px; align-items: flex-start; }
.view.sel { background: #c6c6c6; }
.status .view svg { margin-top: 3px; }
.zoomthumb { width: 4px; height: 12px; margin: 5px 54px 0 63px; background: #666; }
.status .zoomplus { margin-top: 6px; }
.zoom { width: 49px; padding: 2px 0 0 14px; }
```

FILE: app.js
```js
const letters = ["A", "B", "C", "D", "E", "F", "G", "H", "I", "J", "K", "L", "M"];
const heads = ["Ngày", "Số CT", "Diễn giải", "Nợ", "Có", "Số tiền", "Mã vật tư", "Đvt", "Số lượng", "Đơn giá", "Mã công trình", "Hợp đồng", "Ma moi"];
const days = [7, 8, 9, 10, 11, 12, 12, 13, 14, 15, 16, 17];
const amounts = ["261,000", "19,608", "40,936", "39,320", "19,264", "125,824", "738,000", "215,688", "7,224", "94,368", "654,976", "377,472",
  "122,220", "9,150", "19,168", "18,402", "9,054", "59,137", "211,140", "61,700", "2,071", "26,974", "187,439", "108,209"];
const quantities = [29, 3, 17, 5, 1, 2, 82, 33, 3, 12, 34, 6, 13.58, 1.4, 7.96, 2.34, 0.47, 0.94, 23.46, 9.44, 0.86, 3.43, 9.73, 1.72];
const materials = [
  ["A001", "Kg", 9000, "C001"],
  ["A002", "Kg", 6536, "C001"],
  ["A003", "Kg", 2408, "A003"],
  ["A004", "Kg", 7864, "A004"],
  ["B001", "Lít", 19264, "B001"],
  ["B002", "Lít", 62912, "B002"]
];

const filter = '<button aria-label="Filter"><svg width="7" height="4" viewBox="0 0 7 4"><path d="M0 0h7L3.500 4z" fill="#555"/></svg></button>';
const corner = '<th class="corner"><svg width="13" height="13" viewBox="0 0 13 13"><path d="M13 1v11H1z" fill="#b4b4b4"/></svg></th>';
document.querySelector(".grid thead").innerHTML = "<tr>" + corner + letters.map(l => `<th>${l}</th>`).join("") + "</tr>";

const headCells = heads.map((h, i) => `<td><div class="cell"><span>${h}</span>${i < 12 ? filter : ""}</div></td>`).join("");
const rows = amounts.map((amount, i) => {
  const [code, unit, price, newCode] = materials[i % 6];
  const day = days[i] || 18;
  const project = i < 6 ? "Z001" : i < 12 ? "Z002" : "";
  const doc = "PX" + String(i + 1).padStart(3, "0");
  return `<tr><th>${i + 2}</th><td class="num">1/${day}/2016</td><td>${doc}</td><td class="desc">Xuất kho nguyên vật liệu</td>` +
    `<td class="num">1541</td><td class="num">1521</td><td class="money">${amount}</td><td>${code}</td><td>${unit}</td>` +
    `<td class="num">${quantities[i]}</td><td class="num">${price}</td><td>${project}</td><td></td><td>${newCode}</td></tr>`;
});
document.querySelector(".grid tbody").innerHTML = `<tr class="heads"><th>1</th>${headCells}</tr>` + rows.join("");
```
